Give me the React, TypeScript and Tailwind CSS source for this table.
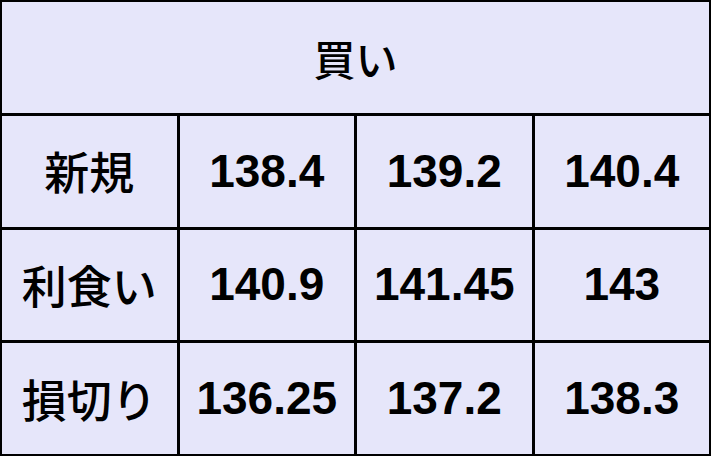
export default function App() {
  const rows = [
    { label: "新規", values: ["138.4", "139.2", "140.4"] },
    { label: "利食い", values: ["140.9", "141.45", "143"] },
    { label: "損切り", values: ["136.25", "137.2", "138.3"] },
  ];

  return (
    <div className="w-[711px] h-[456px] bg-black p-[2px] grid grid-cols-4 grid-rows-4 gap-[3px]">
      <div
        className="col-span-4 bg-[#e6e6fa] flex items-center justify-center text-[42px] font-medium text-black"
        style={{ fontFamily: '"Noto Sans CJK JP", sans-serif' }}
      >
        買い
      </div>
      {rows.map((row) => (
        <>
          <div
            key={row.label}
            className="bg-[#e6e6fa] flex items-center justify-center text-[45px] font-medium text-black"
            style={{ fontFamily: '"Noto Sans CJK JP", sans-serif' }}
          >
            {row.label}
          </div>
          {row.values.map((v, i) => (
            <div
              key={row.label + i}
              className="bg-[#e6e6fa] flex items-center justify-center text-[46px] font-bold text-black font-['Liberation_Sans',sans-serif]"
            >
              {v}
            </div>
          ))}
        </>
      ))}
    </div>
  );
}
